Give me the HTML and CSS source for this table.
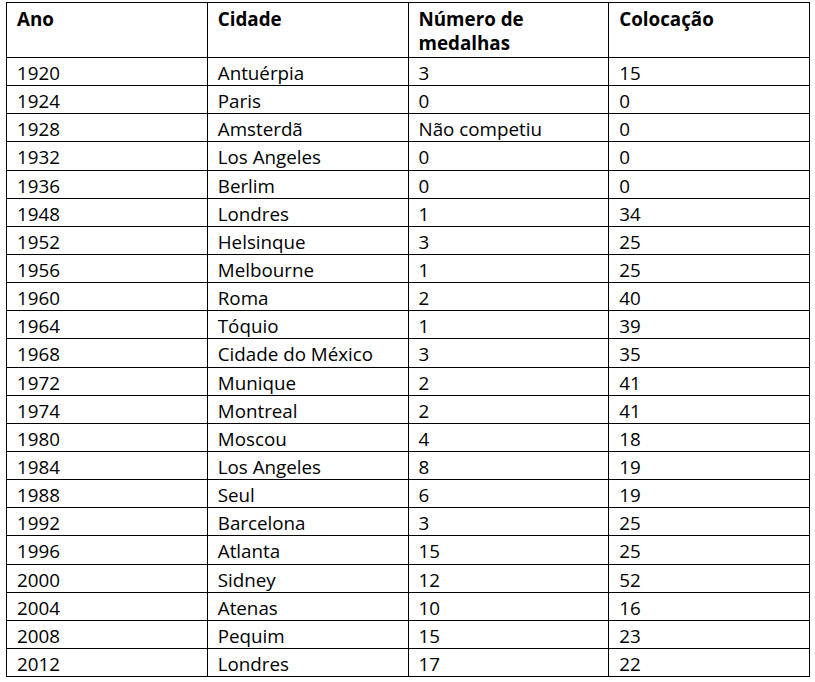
FILE: index.html
```html
<!DOCTYPE html>
<html lang="pt">
<head>
<meta charset="utf-8">
<link rel="stylesheet" href="styles.css">
</head>
<body>
<table class="medals">
<thead>
<tr><th>Ano</th><th>Cidade</th><th>Número de<br>medalhas</th><th>Colocação</th></tr>
</thead>
<tbody>
<tr><td>1920</td><td>Antuérpia</td><td>3</td><td>15</td></tr>
<tr><td>1924</td><td>Paris</td><td>0</td><td>0</td></tr>
<tr><td>1928</td><td>Amsterdã</td><td>Não competiu</td><td>0</td></tr>
<tr><td>1932</td><td>Los Angeles</td><td>0</td><td>0</td></tr>
<tr><td>1936</td><td>Berlim</td><td>0</td><td>0</td></tr>
<tr><td>1948</td><td>Londres</td><td>1</td><td>34</td></tr>
<tr><td>1952</td><td>Helsinque</td><td>3</td><td>25</td></tr>
<tr><td>1956</td><td>Melbourne</td><td>1</td><td>25</td></tr>
<tr><td>1960</td><td>Roma</td><td>2</td><td>40</td></tr>
<tr><td>1964</td><td>Tóquio</td><td>1</td><td>39</td></tr>
<tr><td>1968</td><td>Cidade do México</td><td>3</td><td>35</td></tr>
<tr><td>1972</td><td>Munique</td><td>2</td><td>41</td></tr>
<tr><td>1974</td><td>Montreal</td><td>2</td><td>41</td></tr>
<tr><td>1980</td><td>Moscou</td><td>4</td><td>18</td></tr>
<tr><td>1984</td><td>Los Angeles</td><td>8</td><td>19</td></tr>
<tr><td>1988</td><td>Seul</td><td>6</td><td>19</td></tr>
<tr><td>1992</td><td>Barcelona</td><td>3</td><td>25</td></tr>
<tr><td>1996</td><td>Atlanta</td><td>15</td><td>25</td></tr>
<tr><td>2000</td><td>Sidney</td><td>12</td><td>52</td></tr>
<tr><td>2004</td><td>Atenas</td><td>10</td><td>16</td></tr>
<tr><td>2008</td><td>Pequim</td><td>15</td><td>23</td></tr>
<tr><td>2012</td><td>Londres</td><td>17</td><td>22</td></tr>
</tbody>
</table>
</body>
</html>
```
FILE: styles.css
```css
html, body {
  margin: 0;
  padding: 0;
  background: #ffffff;
}
body {
  padding: 2px 0 0 6px;
  font-family: "Open Sans", "Noto Sans", sans-serif;
  font-size: 18.8px;
  color: #000000;
}
.medals {
  border-collapse: collapse;
  table-layout: fixed;
  width: 804px;
}
.medals th,
.medals td {
  border: 1px solid #000000;
  padding: 3px 10px 0 10px;
  text-align: left;
  vertical-align: top;
  line-height: 24.14px;
}
.medals th {
  font-weight: 700;
  line-height: 24px;
  padding-top: 4px;
  padding-bottom: 2px;
}
```
